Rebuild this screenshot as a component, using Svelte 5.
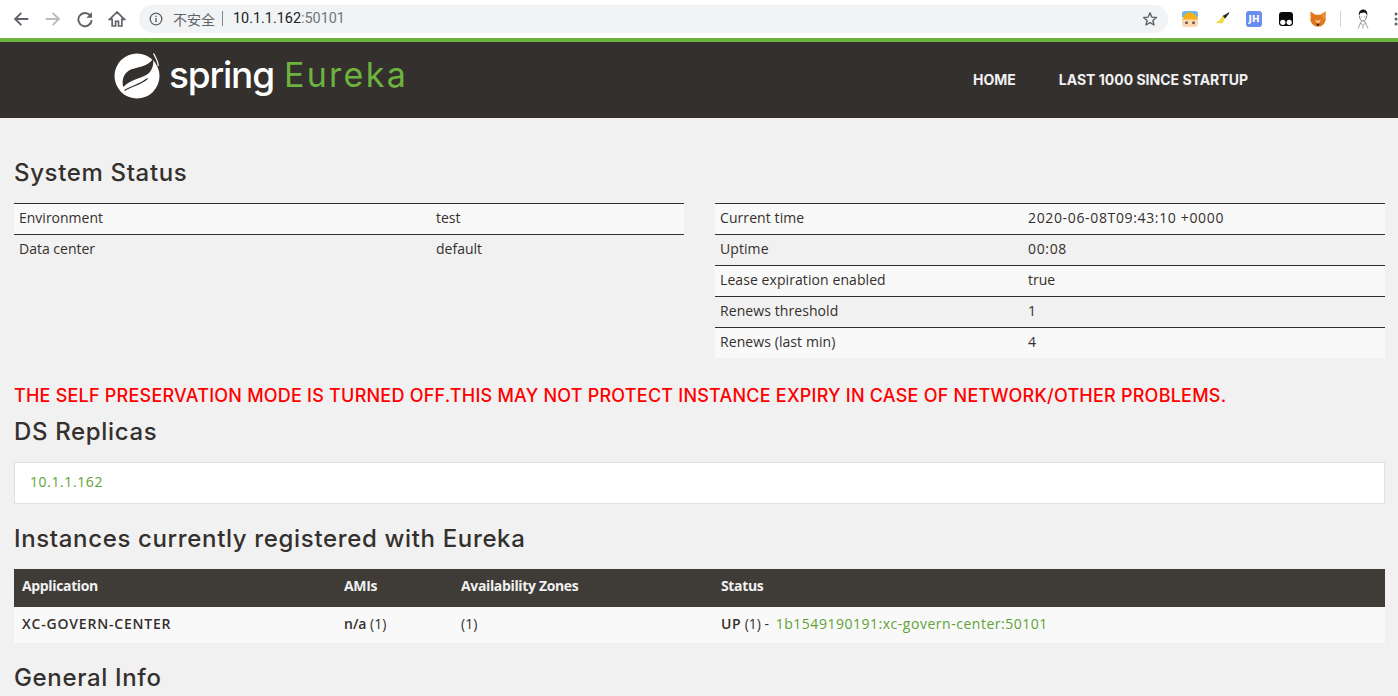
<script>
  const left = [['Environment','test'],['Data center','default']];
  const right = [['Current time','2020-06-08T09:43:10 +0000', true],['Uptime','00:08', true],['Lease expiration enabled','true'],['Renews threshold','1'],['Renews (last min)','4']];
</script>

<div class="page">
  <div class="chrome">
    <div class="navs">
      <svg class="ic" viewBox="0 0 16 16"><path d="M14.500 8H3M8.300 2.500 2.800 8l5.500 5.500" fill="none" stroke="#5f6368" stroke-width="1.700"/></svg>
      <svg class="ic" viewBox="0 0 16 16"><path d="M1.500 8H13M7.700 2.500 13.200 8l-5.500 5.500" fill="none" stroke="#b9bbbe" stroke-width="1.700"/></svg>
      <svg class="ic" viewBox="0 0 16 16"><path d="M12.600 4.800A5.900 5.900 0 1 0 13.900 9" fill="none" stroke="#5f6368" stroke-width="1.700"/><path d="M14.200 1.800v5h-5z" fill="#5f6368"/></svg>
      <svg class="ic" viewBox="0 0 16 16"><path d="M8 1.800 1.500 8.300h2.200v5.900h3V10h2.600v4.200h3V8.300h2.200z" fill="none" stroke="#5f6368" stroke-width="1.500"/></svg>
    </div>
    <div class="omni">
      <svg class="info" viewBox="0 0 14 14"><circle cx="7" cy="7" r="5.800" fill="none" stroke="#5f6368" stroke-width="1.300"/><path d="M7 6v4.200M7 3.700v1.300" stroke="#5f6368" stroke-width="1.400"/></svg>
      <span class="unsafe">不安全</span>
      <span class="sep"></span>
      <span class="url">10.1.1.162<span class="port">:50101</span></span>
      <svg class="star" viewBox="0 0 16 16"><path d="M8 1.800 9.800 6.100 14.400 6.500 10.900 9.500 12 14 8 11.600 4 14 5.100 9.500 1.600 6.500 6.200 6.100z" fill="none" stroke="#5f6368" stroke-width="1.400" stroke-linejoin="round"/></svg>
    </div>
    <div class="exts">
      <svg class="ext" viewBox="0 0 16 16"><rect width="16" height="16" rx="3" fill="#fbd9b5"/><path d="M0 3a3 3 0 0 1 3-3h10a3 3 0 0 1 3 3v3H0z" fill="#6fb5e8"/><path d="M1 8.500C2 3 5 1 8.500 1.500 12 2 15 4.500 15.500 8.500z" fill="#f7b017"/><circle cx="4.500" cy="11.800" r="1.500" fill="#7a5a3c"/><circle cx="11.500" cy="11.800" r="1.500" fill="#7a5a3c"/></svg>
      <svg class="ext" viewBox="0 0 16 16"><path d="M15 1.800 9 5.200l1.800 2.200z" fill="#2a2a22" stroke="#2a2a22"/><path d="M8.800 5 11 7.500 8.500 12.500 1 11.800 5 9.500z" fill="#f2da4a"/></svg>
      <div class="jh">JH</div>
      <svg class="ext" viewBox="0 0 16 16"><path d="M1 4a3 3 0 0 1 3-3h8a3 3 0 0 1 3 3v9a3 3 0 0 1-3 2H4a3 3 0 0 1-3-2z" fill="#0a0a0a"/><circle cx="4.800" cy="11.300" r="2.600" fill="#fff"/><circle cx="11.200" cy="11.300" r="2.600" fill="#fff"/></svg>
      <svg class="ext" viewBox="0 0 16 16"><path d="M.300 .500 5.500 3.800h5L15.700 .500 15.300 6l.500 3-1.800 4-3.500 2.500H5.500L2 13 .200 9 .700 6z" fill="#e2761b"/><path d="M10.500 3.800 15.700 .500 15.300 6l.500 3-3-1.500z" fill="#f08a2e"/><path d="M5 8.500 6.800 12h2.400L11 8.500 8 9.800z" fill="#f6c89f"/><path d="M6.500 12.800h3L8.700 15H7.300z" fill="#33261c"/></svg>
      <span class="div"></span>
      <svg class="avatar" viewBox="0 0 12 20"><path d="M2.500 7c0 3 1.500 5 3.500 5s3.500-2 3.500-5" fill="#fff" stroke="#444" stroke-width=".7"/><path d="M2 7C1 2.500 4 .300 6.500.500 10 .800 11 4 10 7.500 9.500 5 9 3.800 7.500 3.500 6 4 4 3.500 3 4.500 2.500 5.500 2.500 6 2 7z" fill="#111"/><path d="M4 8h1M7 8h1M4.500 12 1 19.500M7.500 12 11 19.500M3 13.500 6 16.500 9 13.500M6 16.500V19.500" fill="none" stroke="#777" stroke-width=".7"/></svg>
      <svg class="dots" viewBox="0 0 4 14"><circle cx="2" cy="2" r="1.500"/><circle cx="2" cy="7" r="1.500"/><circle cx="2" cy="12" r="1.500"/></svg>
    </div>
  </div>

  <header class="bar">
    <div class="brand">
      <svg class="leaf" viewBox="0 0 46 46">
        <circle cx="23" cy="23" r="22.500" fill="#fff"/>
        <path d="M9.300 34C7.500 27 9.500 21 15 17.500 21 14 33 14.500 39 6c1 5-.500 10-3.500 13.500C30 25.500 17 25.500 9.300 34z" fill="#34302d"/>
        <path d="M10.500 37.500C17 33 26 32 33.500 25.500" fill="none" stroke="#34302d" stroke-width="1.200"/>
        <path d="M37 0H46V12L42 4.500 40.500 3z" fill="#34302d"/>
        <path d="M39.500 .500C41.500 4 44 8 44.300 13" fill="none" stroke="#fff" stroke-width="1.300"/>
      </svg>
      <span class="spring">spring</span>
      <span class="eureka">Eureka</span>
    </div>
    <nav class="menu">
      <span>HOME</span>
      <span>LAST 1000 SINCE STARTUP</span>
    </nav>
  </header>

  <main class="content">
    <h2 class="status-h">System Status</h2>
    <div class="cols">
      <table class="t-left">
        <tbody>
          {#each left as r, i}
            <tr class:odd={i % 2 === 0}><td class="c1">{r[0]}</td><td>{r[1]}</td></tr>
          {/each}
        </tbody>
      </table>
      <table class="t-right">
        <tbody>
          {#each right as r, i}
            <tr class:odd={i % 2 === 0}><td class="c1r">{r[0]}</td><td class:num={r[2]}>{r[1]}</td></tr>
          {/each}
        </tbody>
      </table>
    </div>

    <h4 class="warn">THE SELF PRESERVATION MODE IS TURNED OFF.THIS MAY NOT PROTECT INSTANCE EXPIRY IN CASE OF NETWORK/OTHER PROBLEMS.</h4>
    <h2 class="ds-h">DS Replicas</h2>
    <div class="well"><a class="ip" href="#top">10.1.1.162</a></div>

    <h2 class="inst-h">Instances currently registered with Eureka</h2>
    <table class="inst">
      <thead>
        <tr><th class="a">Application</th><th class="b">AMIs</th><th class="c">Availability Zones</th><th>Status</th></tr>
      </thead>
      <tbody>
        <tr>
          <td><b class="app">XC-GOVERN-CENTER</b></td>
          <td><b>n/a</b> (1)</td>
          <td>(1)</td>
          <td><b class="up">UP</b> (1) - <a class="inst-link" href="#top">1b1549190191:xc-govern-center:50101</a></td>
        </tr>
      </tbody>
    </table>
    <h2 class="gen-h">General Info</h2>
  </main>
</div>

<style>
  :global(body) { margin: 0; background: #f1f1f1; overflow: hidden; }
  .page { height: 696px; overflow: hidden; font-family: "Open Sans", "Noto Sans", sans-serif; color: #34302d; font-size: 14px; }

  .chrome { height: 38px; background: #fff; display: flex; align-items: center; }
  .navs { display: flex; align-items: center; gap: 14px; padding-left: 12px; width: 139px; box-sizing: border-box; }
  .ic { width: 18px; height: 18px; flex: none; }
  .omni { width: 1029px; height: 28px; margin-top: -1px; background: #f1f3f4; border-radius: 14px; display: flex; align-items: center; padding-left: 10px; box-sizing: border-box; }
  .info { width: 14px; height: 14px; margin-right: 10px; }
  .unsafe { font: 14px/20px "Noto Sans CJK SC", sans-serif; color: #5f6368; }
  .sep { width: 1px; height: 15px; background: #80868b; margin: 0 10px 0 7px; }
  .url { font: 14.400px Roboto, sans-serif; color: #202124; }
  .port { color: #70757a; }
  .star { width: 16px; height: 16px; margin-left: auto; margin-right: 10px; }
  .exts { display: flex; align-items: center; flex: 1; padding-left: 14px; height: 100%; }
  .ext { width: 16px; height: 16px; flex: none; margin-right: 16px; }
  .jh { width: 16px; height: 16px; margin-right: 16px; background: #6a8ef0; border-radius: 3px; color: #fff; font: bold 9px/16px "DejaVu Sans", sans-serif; text-align: center; flex: none; }
  .div { width: 1px; height: 16px; background: #d0d2d4; margin-right: 16px; margin-left: -2px; flex: none; }
  .avatar { width: 12px; height: 20px; margin-right: 25px; flex: none; }
  .dots { width: 4px; height: 14px; fill: #5f6368; flex: none; }

  .bar { height: 76px; background: #34302d; border-top: 4px solid #6db33f; position: relative; }
  .brand { display: flex; align-items: center; padding-left: 114px; height: 68px; }
  .leaf { width: 46px; height: 46px; flex: none; margin-right: 9px; }
  .spring { font: 500 37px/46px Inter, "Open Sans", sans-serif; color: #fff; letter-spacing: -1.200px; margin-right: 10px; position: relative; top: -1px; }
  .eureka { font: 400 34px/46px Inter, "Open Sans", sans-serif; color: #6db33f; letter-spacing: 2.300px; position: relative; top: -1px; }
  .menu { position: absolute; left: 973px; top: 29px; display: flex; gap: 43px; font: 700 14px/17px Inter, "Open Sans", sans-serif; color: #f1f1f1; }

  .content { padding: 0 13px 0 14px; }
  h2 { font: 500 24px/28px Inter, "Noto Sans", sans-serif; color: #34302d; margin: 0; letter-spacing: .65px; }
  .status-h { padding-top: 41px; }
  .cols { display: flex; gap: 31px; margin-top: 16px; height: 155px; }
  table { border-collapse: collapse; border-spacing: 0; }
  .t-left { width: 670px; }
  .t-right { flex: 1; }
  .t-left, .t-right { height: max-content; }
  .cols td { height: 28px; padding: 0 0 2px 5px; border-top: 1px solid #34302d; line-height: 28px; }
  .cols td.num { letter-spacing: .65px; }
  .c1 { width: 412px; }
  .c1r { width: 303px; letter-spacing: .08px; }
  .odd td { background: #f9f9f9; }
  .cols tr:not(.odd) td { background: #f1f1f1; }

  .warn { font: 500 18px/22px Inter, "Open Sans", sans-serif; letter-spacing: .22px; color: #f00; margin: 27px 0 0; white-space: nowrap; }
  .ds-h { margin-top: 11px; }
  .well { margin-top: 16px; background: #fff; border: 1px solid #e1e1e1; display: flex; align-items: center; padding: 0 0 3px 15px; height: 37px; }
  a { color: #5fa134; text-decoration: none; }
  .ip { letter-spacing: .6px; }
  .inst-link { letter-spacing: .52px; margin-left: 3px; }
  .inst-h { margin-top: 21px; }
  .inst { width: 100%; margin-top: 16px; }
  .inst th { background: #3f3b37; color: #f1f1f1; text-align: left; height: 33px; padding: 0 0 5px 8px; font-weight: 700; letter-spacing: -.35px; }
  .inst td { background: #f9f9f9; height: 32px; padding: 0 0 4px 8px; }
  .inst td b { font-weight: 600; }
  .inst td b.app { letter-spacing: .8px; }
  .inst td b.up { letter-spacing: .5px; }
  .a { width: 314px; }
  .b { width: 109px; }
  .c { width: 252px; }
  .gen-h { margin-top: 21px; }
</style>
